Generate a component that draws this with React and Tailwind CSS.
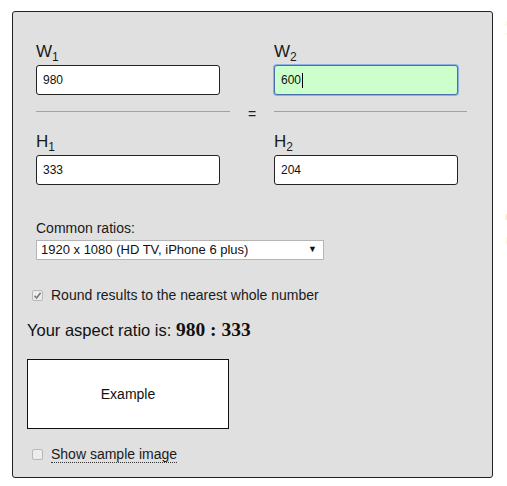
import React from "react";

function Label({ letter, sub }) {
  return (
    <div className="h-[24px] pb-[3px] flex items-end text-[17px] leading-none text-[#1a1a1a]">
      <span>{letter}</span>
      <span className="text-[12px] relative top-[3px]">{sub}</span>
    </div>
  );
}

function Input({ value, focused }) {
  return (
    <div
      className={
        "mt-[2px] h-[30px] w-[184px] rounded-[3px] border flex items-center pl-[6px] text-[12px] text-[#111] " +
        (focused
          ? "bg-[#ccffcc] border-[#4a6fae] shadow-[0_0_0_1px_#8fb0e6]"
          : "bg-white border-[#222]")
      }
    >
      <span>{value}</span>
      {focused && <span className="inline-block w-px h-[15px] bg-black ml-px" />}
    </div>
  );
}

export default function App() {
  return (
    <div
      className="relative w-[507px] h-[486px] bg-white overflow-hidden"
      style={{ fontFamily: '"Liberation Sans", Arial, sans-serif' }}
    >
      <div className="absolute left-[505px] top-[21px] w-[2px] h-[5px] bg-[#fffadb]" />
      <div className="absolute left-[505px] top-[33px] w-[2px] h-[2px] bg-[#fffadb]" />
      <div className="absolute left-[505px] top-[214px] w-[2px] h-[6px] bg-[#fff0d0]" />
      <div className="absolute left-[505px] top-[237px] w-[2px] h-[7px] bg-[#fffadb]" />

      <div className="ml-[12px] mt-[11px] w-[481px] h-[467px] bg-[#e0e0e0] border border-[#222] rounded-[3px] pt-[27px]">
        <div className="ml-[23px] w-[431px] flex">
          <div className="w-[194px]">
            <Label letter="W" sub="1" />
            <Input value="980" />
            <div className="mt-[16px] h-px bg-[#a3a3a3]" />
            <div className="mt-[17px]">
              <Label letter="H" sub="1" />
              <Input value="333" />
            </div>
          </div>
          <div className="w-[44px] flex justify-center">
            <span className="mt-[68px] text-[14px] leading-none text-[#222]">=</span>
          </div>
          <div className="w-[193px]">
            <Label letter="W" sub="2" />
            <Input value="600" focused />
            <div className="mt-[16px] h-px bg-[#a3a3a3]" />
            <div className="mt-[17px]">
              <Label letter="H" sub="2" />
              <Input value="204" />
            </div>
          </div>
        </div>

        <div className="ml-[23px] mt-[35px] text-[14px] leading-[17px] text-[#1a1a1a]">Common ratios:</div>
        <div className="ml-[23px] mt-[3px] w-[288px] h-[20px] bg-white border border-[#b5b5b5] flex items-center justify-between pl-[4px] pr-[6px] text-[13px] text-[#111]">
          <span>1920 x 1080 (HD TV, iPhone 6 plus)</span>
          <span className="text-[9px]">▼</span>
        </div>

        <div className="ml-[19px] mt-[25px] flex items-center h-[20px]">
          <span className="w-[11px] h-[11px] rounded-[2px] border border-[#b8b8b8] bg-[#ececec] flex items-center justify-center">
            <svg width="9" height="9" viewBox="0 0 9 9">
              <path d="M1.5 4.8 L3.6 7 L7.6 1.8" fill="none" stroke="#7a7a7a" strokeWidth="1.6" />
            </svg>
          </span>
          <span className="ml-[8px] text-[14px] text-[#1a1a1a]">Round results to the nearest whole number</span>
        </div>

        <div className="ml-[14px] mt-[14px] h-[22px] flex items-center text-[16.5px] text-[#111]">
          <span>Your aspect ratio is:&nbsp;</span>
          <span className="font-bold text-[19.5px]" style={{ fontFamily: '"Liberation Serif", "Times New Roman", serif' }}>
            980 : 333
          </span>
        </div>

        <div className="ml-[14px] mt-[18px] w-[202px] h-[70px] bg-white border border-[#111] flex items-center justify-center text-[14px] text-[#111]">
          Example
        </div>

        <div className="ml-[19px] mt-[15px] flex items-center h-[20px]">
          <span className="w-[11px] h-[11px] rounded-[2px] border border-[#b8b8b8] bg-[#ececec]" />
          <span className="ml-[8px] text-[14px] text-[#1a1a1a] border-b border-dotted border-[#333] leading-[16px]">
            Show sample image
          </span>
        </div>
      </div>
    </div>
  );
}
